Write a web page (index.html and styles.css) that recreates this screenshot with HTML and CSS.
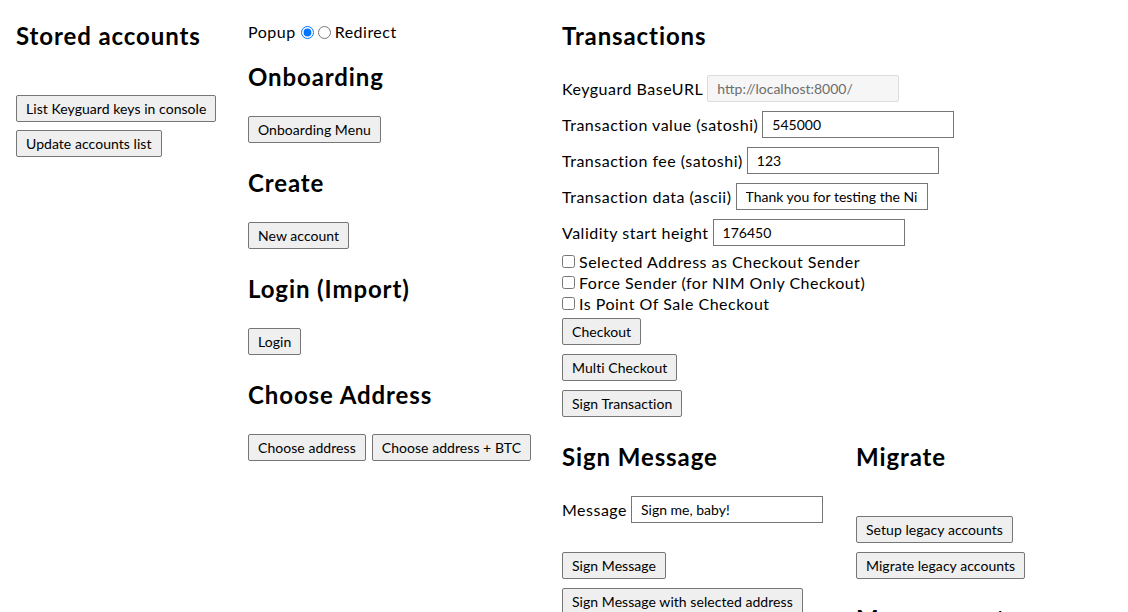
FILE: index.html
```html
<!DOCTYPE html>
<html lang="en">
<head>
<meta charset="utf-8">
<title>Hub Demo</title>
<link rel="stylesheet" href="styles.css">
</head>
<body>
<div class="page">
  <div class="col col-accounts">
    <h2 class="heading">Stored accounts</h2>
    <div class="stack stack-accounts">
      <div><button class="btn">List Keyguard keys in console</button></div>
      <div><button class="btn">Update accounts list</button></div>
    </div>
  </div>

  <div class="col col-flows">
    <div class="mode">
      <span>Popup</span>
      <input type="radio" name="mode" class="radio radio-first" checked>
      <input type="radio" name="mode" class="radio">
      <span>Redirect</span>
    </div>
    <section class="section">
      <h2 class="heading">Onboarding</h2>
      <div class="actions"><button class="btn">Onboarding Menu</button></div>
    </section>
    <section class="section">
      <h2 class="heading">Create</h2>
      <div class="actions"><button class="btn">New account</button></div>
    </section>
    <section class="section">
      <h2 class="heading">Login (Import)</h2>
      <div class="actions"><button class="btn">Login</button></div>
    </section>
    <section class="section">
      <h2 class="heading">Choose Address</h2>
      <div class="actions row"><button class="btn">Choose address</button><button class="btn">Choose address + BTC</button></div>
    </section>
  </div>

  <div class="col col-tx">
    <h2 class="heading">Transactions</h2>
    <div class="fields">
      <label class="field">Keyguard BaseURL <input class="input" type="text" value="http://localhost:8000/" disabled></label>
      <label class="field">Transaction value (satoshi) <input class="input" type="text" value="545000"></label>
      <label class="field">Transaction fee (satoshi) <input class="input" type="text" value="123"></label>
      <label class="field">Transaction data (ascii) <input class="input" type="text" value="Thank you for testing the Nimiq Hub!"></label>
      <label class="field">Validity start height <input class="input" type="text" value="176450"></label>
    </div>
    <div class="checks">
      <label class="check"><input type="checkbox" class="checkbox">Selected Address as Checkout Sender</label>
      <label class="check"><input type="checkbox" class="checkbox">Force Sender (for NIM Only Checkout)</label>
      <label class="check"><input type="checkbox" class="checkbox">Is Point Of Sale Checkout</label>
    </div>
    <div class="stack stack-tx">
      <div><button class="btn">Checkout</button></div>
      <div><button class="btn">Multi Checkout</button></div>
      <div><button class="btn">Sign Transaction</button></div>
    </div>

    <div class="subcols">
      <section class="sub sub-sign">
        <h2 class="heading">Sign Message</h2>
        <label class="field field-msg">Message <input class="input" type="text" value="Sign me, baby!"></label>
        <div class="stack stack-sign">
          <div><button class="btn">Sign Message</button></div>
          <div><button class="btn">Sign Message with selected address</button></div>
        </div>
      </section>
      <section class="sub sub-migrate">
        <h2 class="heading">Migrate</h2>
        <div class="stack stack-migrate">
          <div><button class="btn">Setup legacy accounts</button></div>
          <div><button class="btn">Migrate legacy accounts</button></div>
        </div>
        <h2 class="heading heading-manage">Management</h2>
      </section>
    </div>
  </div>
</div>
</body>
</html>
```

FILE: styles.css
```css
html, body {
  margin: 0;
  padding: 0;
  background: #ffffff;
}

body {
  font-family: Lato, "Open Sans", sans-serif;
  font-size: 16px;
  letter-spacing: 0.5px;
  color: #000000;
  overflow: hidden;
  height: 612px;
}

.page {
  display: flex;
  align-items: flex-start;
  padding: 0 16px;
}

.col-accounts {
  width: 232px;
  flex: none;
  padding-top: 21px;
}

.col-flows {
  width: 314px;
  flex: none;
  padding-top: 22px;
}

.col-tx {
  flex: 1;
  padding-top: 21px;
}

.heading {
  margin: 0;
  font-size: 24px;
  font-weight: 700;
  line-height: 30px;
  letter-spacing: 0.9px;
}

.btn {
  font-family: inherit;
  font-size: 14px;
  line-height: 17px;
  letter-spacing: 0.05px;
  color: #000000;
  background: #efefef;
  border: 1px solid #767676;
  border-radius: 2px;
  padding: 4px 9px;
  height: 27px;
  margin: 0;
  white-space: nowrap;
}

.stack {
  display: flex;
  flex-direction: column;
  align-items: flex-start;
}

.stack-accounts {
  margin-top: 44px;
  gap: 8px;
}

.mode {
  display: flex;
  align-items: center;
  height: 20px;
  line-height: 20px;
}

.radio {
  width: 13px;
  height: 13px;
  margin: 0 4px 0 0;
}

.radio-first {
  margin-left: 5px;
}

.section {
  margin-top: 25px;
}

.mode + .section {
  margin-top: 20px;
}

.actions {
  margin-top: 24px;
}

.row {
  display: flex;
  gap: 6px;
}

.fields {
  margin-top: 24px;
  display: flex;
  flex-direction: column;
  gap: 9px;
}

.field {
  display: flex;
  align-items: center;
  gap: 4px;
  height: 27px;
  line-height: 20px;
}

.input {
  box-sizing: border-box;
  width: 192px;
  height: 27px;
  margin: 0;
  padding: 0 9px;
  font-family: inherit;
  font-size: 14px;
  letter-spacing: 0;
  color: #000000;
  background: #ffffff;
  border: 1px solid #767676;
  border-radius: 0;
}

.input:disabled {
  background: #f6f6f6;
  border-color: #dcdcdc;
  color: #6d6d6d;
  border-radius: 2px;
}

.checks {
  margin-top: 5px;
  display: flex;
  flex-direction: column;
}

.check {
  display: flex;
  align-items: center;
  height: 21px;
  line-height: 21px;
}

.checkbox {
  width: 13px;
  height: 13px;
  margin: 0 4px 0 0;
}

.stack-tx {
  margin-top: 4px;
  gap: 9px;
}

.subcols {
  display: flex;
  align-items: flex-start;
  margin-top: 25px;
}

.sub-sign {
  width: 294px;
  flex: none;
}

.field-msg {
  margin-top: 24px;
}

.stack-sign {
  margin-top: 29px;
  gap: 9px;
}

.stack-migrate {
  margin-top: 44px;
  gap: 9px;
}

.heading-manage {
  margin-top: 25px;
}
```
